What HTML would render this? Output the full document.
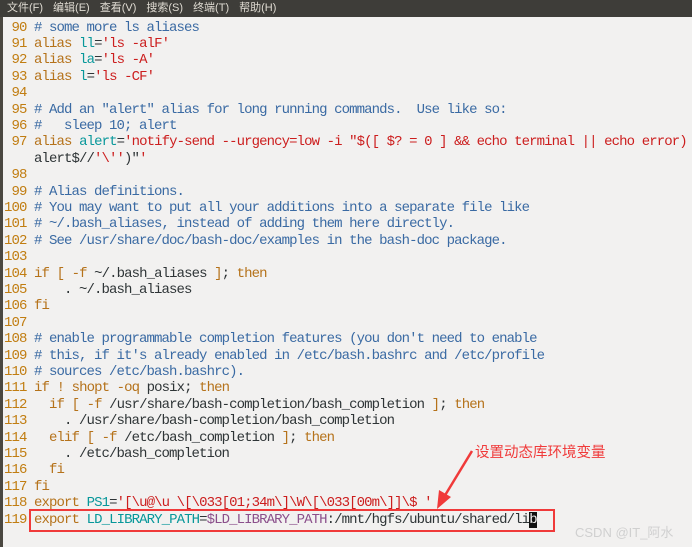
<!DOCTYPE html>
<html><head><meta charset="utf-8"><style>
html,body{margin:0;padding:0}
body{width:692px;height:547px;overflow:hidden;background:#f2f1f0;position:relative;font-family:"Liberation Mono",monospace}
#menu{position:absolute;left:0;top:0;width:692px;height:17px;background:#3e3d39;color:#dfdbd2;font:11px "Liberation Sans","Noto Sans CJK SC",sans-serif;line-height:17px}
#menu span{margin-left:7px;margin-right:3px}
#strip{position:absolute;left:0;top:17px;width:3px;height:530px;background:#4a4740}
pre{position:absolute;left:4px;top:19.5px;margin:0;font-size:14px;letter-spacing:-0.9px;line-height:16.4px;color:#2e3436;font-family:"Liberation Mono",monospace}
.n{color:#c17d11}.c{color:#3a6aa3}.k{color:#b5721a}.s{color:#cc1e1e}.v{color:#07979a}.p{color:#8b4f8b}
#box{position:absolute;left:29px;top:509px;width:526px;height:23px;border:2px solid #f03a3a;box-sizing:border-box}
#note{position:absolute;left:475px;top:443px;color:#f03a3a;font:14.5px "Noto Sans CJK SC",sans-serif;line-height:18px}
#cur{background:#111;color:#f2f1f0}
#wm{position:absolute;left:575px;top:522px;color:#d0d0d0;font:13px "Liberation Sans","Noto Sans CJK SC",sans-serif}
</style></head><body>
<div id="menu"><span>文件(F)</span><span>编辑(E)</span><span>查看(V)</span><span>搜索(S)</span><span>终端(T)</span><span>帮助(H)</span></div>
<div id="strip"></div>
<pre><span class="n"> 90</span> <span class="c"># some more ls aliases</span>
<span class="n"> 91</span> <span class="k">alias</span> <span class="v">ll</span>=<span class="s">'ls -alF'</span>
<span class="n"> 92</span> <span class="k">alias</span> <span class="v">la</span>=<span class="s">'ls -A'</span>
<span class="n"> 93</span> <span class="k">alias</span> <span class="v">l</span>=<span class="s">'ls -CF'</span>
<span class="n"> 94</span>
<span class="n"> 95</span> <span class="c"># Add an "alert" alias for long running commands.  Use like so:</span>
<span class="n"> 96</span> <span class="c">#   sleep 10; alert</span>
<span class="n"> 97</span> <span class="k">alias</span> <span class="v">alert</span>=<span class="s">'notify-send --urgency=low -i "$([ $? = 0 ] &amp;&amp; echo terminal || echo error)</span>
    alert$//<span class="s">'\''</span>)"<span class="s">'</span>
<span class="n"> 98</span>
<span class="n"> 99</span> <span class="c"># Alias definitions.</span>
<span class="n">100</span> <span class="c"># You may want to put all your additions into a separate file like</span>
<span class="n">101</span> <span class="c"># ~/.bash_aliases, instead of adding them here directly.</span>
<span class="n">102</span> <span class="c"># See /usr/share/doc/bash-doc/examples in the bash-doc package.</span>
<span class="n">103</span>
<span class="n">104</span> <span class="k">if</span> <span class="k">[</span> <span class="k">-f</span> ~/.bash_aliases <span class="k">]</span>; <span class="k">then</span>
<span class="n">105</span>     . ~/.bash_aliases
<span class="n">106</span> <span class="k">fi</span>
<span class="n">107</span>
<span class="n">108</span> <span class="c"># enable programmable completion features (you don't need to enable</span>
<span class="n">109</span> <span class="c"># this, if it's already enabled in /etc/bash.bashrc and /etc/profile</span>
<span class="n">110</span> <span class="c"># sources /etc/bash.bashrc).</span>
<span class="n">111</span> <span class="k">if</span> <span class="k">!</span> <span class="k">shopt</span> <span class="k">-oq</span> posix; <span class="k">then</span>
<span class="n">112</span>   <span class="k">if</span> <span class="k">[</span> <span class="k">-f</span> /usr/share/bash-completion/bash_completion <span class="k">]</span>; <span class="k">then</span>
<span class="n">113</span>     . /usr/share/bash-completion/bash_completion
<span class="n">114</span>   <span class="k">elif</span> <span class="k">[</span> <span class="k">-f</span> /etc/bash_completion <span class="k">]</span>; <span class="k">then</span>
<span class="n">115</span>     . /etc/bash_completion
<span class="n">116</span>   <span class="k">fi</span>
<span class="n">117</span> <span class="k">fi</span>
<span class="n">118</span> <span class="k">export</span> <span class="v">PS1</span>=<span class="s">'[\u@\u \[\033[01;34m\]\W\[\033[00m\]]\$ '</span>
<span class="n">119</span> <span class="k">export</span> <span class="v">LD_LIBRARY_PATH</span>=<span class="p">$LD_LIBRARY_PATH</span>:/mnt/hgfs/ubuntu/shared/li<span id="cur">b</span></pre>
<div id="box"></div>
<div id="note">设置动态库环境变量</div>
<svg style="position:absolute;left:0;top:0" width="692" height="547"><path d="M472 451 L444 497" stroke="#f03a3a" stroke-width="2.5" fill="none"/><polygon points="437,509 439,490 451,497" fill="#f03a3a"/></svg>
<div id="wm">CSDN @IT_阿水</div>
</body></html>
